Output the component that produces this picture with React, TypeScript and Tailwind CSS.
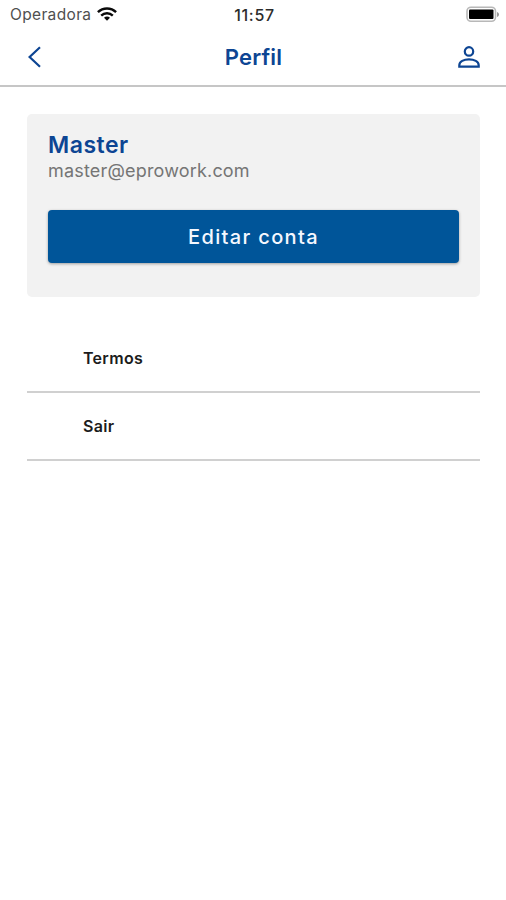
function StatusBar() {
  return (
    <div className="grid h-7 grid-cols-3 items-center pl-[10px] pr-[7px]">
      <div className="flex items-center gap-[6px]">
        <span className="pt-px text-[15.5px] leading-7 tracking-[0.35px] text-[#505050]">Operadora</span>
        <svg className="mb-px" width="20" height="14" viewBox="0 0 20 14" fill="none" stroke="#0a0a0a" strokeWidth="2.4">
          <path d="M0.9 5.2C6 .3 14 .3 19.1 5.2" />
          <path d="M4.2 8.6C7.400 5.500 12.600 5.500 15.800 8.600" />
          <path d="M7 10.800C8.700 9.200 11.300 9.200 13 10.800L10 13.800Z" fill="#0a0a0a" stroke="none" />
        </svg>
      </div>
      <span className="text-center text-[16px] font-medium leading-7 tracking-[0.7px] text-[#2c2c2c]">11:57</span>
      <svg className="justify-self-end" width="34" height="17" viewBox="0 0 34 17">
        <rect x="2" y="1.250" width="28.500" height="14" rx="4" fill="#fff" stroke="#b8b8b8" strokeWidth="1.600" />
        <rect x="4" y="3.500" width="24.500" height="9.500" rx="1" fill="#000" />
        <path d="M32 6v5c1.300-.500 2-1.300 2-2.500S33.300 6.500 32 6Z" fill="#999" />
      </svg>
    </div>
  );
}

function Header() {
  return (
    <header className="grid h-[59px] grid-cols-3 items-center border-b-2 border-[#c6c6c6] pl-[28px] pr-[25px] text-[#0d4593]">
      <button aria-label="Voltar" className="justify-self-start">
        <svg width="14" height="22" viewBox="0 0 14 22" fill="none" stroke="currentColor" strokeWidth="2.200">
          <path d="M12 1.200 1.600 11 12 20.800" />
        </svg>
      </button>
      <h1 className="pr-[2px] text-center text-[22px] font-semibold leading-7 tracking-[0.2px]">Perfil</h1>
      <button aria-label="Conta" className="justify-self-end">
        <svg width="24" height="24" viewBox="0 0 24 24" fill="none" stroke="currentColor" strokeWidth="2.200">
          <circle cx="12" cy="6.400" r="4.200" />
          <path d="M2.300 21.700h19.400v-1.500c0-3.700-4.500-5.800-9.700-5.800s-9.700 2.100-9.700 5.800Z" />
        </svg>
      </button>
    </header>
  );
}

function MenuItem({ label }: { label: string }) {
  return (
    <li className="flex h-[68.500px] items-center border-b-2 border-[#d0d0d0] pl-14 pt-px text-[16px] font-semibold tracking-[0.3px] text-[#1c1c1c]">
      {label}
    </li>
  );
}

export default function App() {
  return (
    <div className="min-h-[900px] bg-white font-['Inter','Liberation_Sans',sans-serif]">
      <StatusBar />
      <Header />
      <main className="px-[27px] pt-[27px]">
        <section className="h-[183px] w-[453px] rounded-[5px] bg-[#f2f2f2] px-[21px] pt-[17px]">
          <h2 className="text-[23px] font-semibold leading-7 tracking-[0.500px] text-[#0d4593]">Master</h2>
          <p className="text-[18px] leading-6 tracking-[0.180px] text-[#757575]">master@eprowork.com</p>
          <button className="mt-[27px] h-[53px] w-full rounded-[4px] bg-[#005599] text-[20px] font-medium tracking-[1.350px] text-[#f5f8ff] shadow-[0_1px_3px_rgba(0,0,0,0.35)]">
            Editar conta
          </button>
        </section>
        <ul className="mt-[27px] w-[453px]">
          <MenuItem label="Termos" />
          <MenuItem label="Sair" />
        </ul>
      </main>
    </div>
  );
}
